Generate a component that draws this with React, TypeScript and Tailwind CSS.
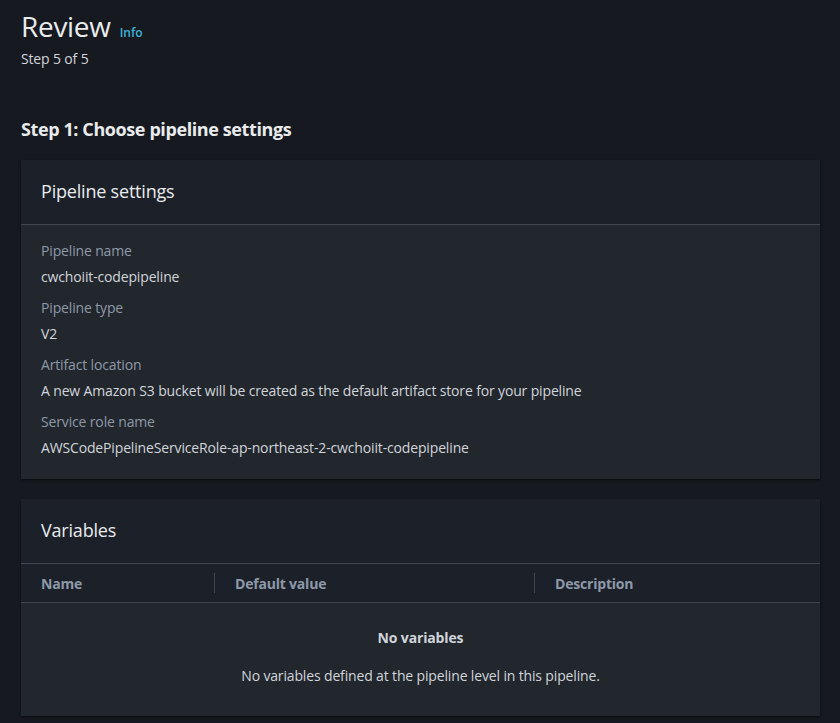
import React from "react";

function Field({ label, value }: { label: string; value: string }) {
  return (
    <div className="flex flex-col">
      <div className="text-[14px] leading-[22px] text-[#8d99a8] tracking-[-0.15px]">{label}</div>
      <div className="mt-[4px] text-[14px] leading-[22px] text-[#d1d5db] tracking-[-0.15px]">{value}</div>
    </div>
  );
}

export default function App() {
  return (
    <div className="min-h-[723px] w-full bg-[#16191f] pl-[21px] pr-[20px] pt-[8px] pb-[8px] [font-family:'Open_Sans','Noto_Sans',Arial,sans-serif]">
      <div className="flex items-baseline gap-[9px]">
        <h1 className="text-[28px] leading-[36px] text-[#e9ebed] tracking-[-0.3px]">Review</h1>
        <a className="text-[12px] font-semibold text-[#3fb2d9]">Info</a>
      </div>
      <div className="mt-[5px] text-[14px] leading-[20px] text-[#d1d5db] tracking-[-0.15px]">Step 5 of 5</div>

      <h2 className="mt-[49px] text-[18px] leading-[22px] font-bold text-[#e9ebed] tracking-[-0.4px]">Step 1: Choose pipeline settings</h2>

      <section className="mt-[20px] bg-[#22262d] shadow-[0_1px_2px_rgba(0,0,0,0.6)]">
        <div className="h-[65px] flex items-center px-[20px] bg-[#1c2028] border-b border-[#414750]">
          <h3 className="text-[18px] leading-[22px] text-[#e9ebed] tracking-[-0.2px] -mt-[2px]">Pipeline settings</h3>
        </div>
        <div className="px-[20px] pt-[15px] pb-[20px] flex flex-col gap-[9px]">
          <Field label="Pipeline name" value="cwchoiit-codepipeline" />
          <Field label="Pipeline type" value="V2" />
          <Field label="Artifact location" value="A new Amazon S3 bucket will be created as the default artifact store for your pipeline" />
          <Field label="Service role name" value="AWSCodePipelineServiceRole-ap-northeast-2-cwchoiit-codepipeline" />
        </div>
      </section>

      <section className="mt-[20px] bg-[#22262d] shadow-[0_1px_2px_rgba(0,0,0,0.6)]">
        <div className="h-[65px] flex items-center px-[20px] bg-[#1c2028] border-b border-[#414750]">
          <h3 className="text-[18px] leading-[22px] text-[#e9ebed] tracking-[-0.2px] -mt-[2px]">Variables</h3>
        </div>
        <div className="h-[39px] flex items-center bg-[#1c2028] border-b border-[#414750] text-[14px] font-bold text-[#8d99a8] tracking-[-0.2px]">
          <div className="w-[194px] pl-[20px] border-r border-[#414750] h-[20px] flex items-center">Name</div>
          <div className="w-[320px] pl-[20px] border-r border-[#414750] h-[20px] flex items-center">Default value</div>
          <div className="pl-[20px] flex items-center">Description</div>
        </div>
        <div className="h-[113px] flex flex-col items-center pt-[24px] text-[14px] text-[#d1d5db] tracking-[-0.15px]">
          <div className="font-bold leading-[22px]">No variables</div>
          <div className="mt-[16px] leading-[22px]">No variables defined at the pipeline level in this pipeline.</div>
        </div>
      </section>
    </div>
  );
}
